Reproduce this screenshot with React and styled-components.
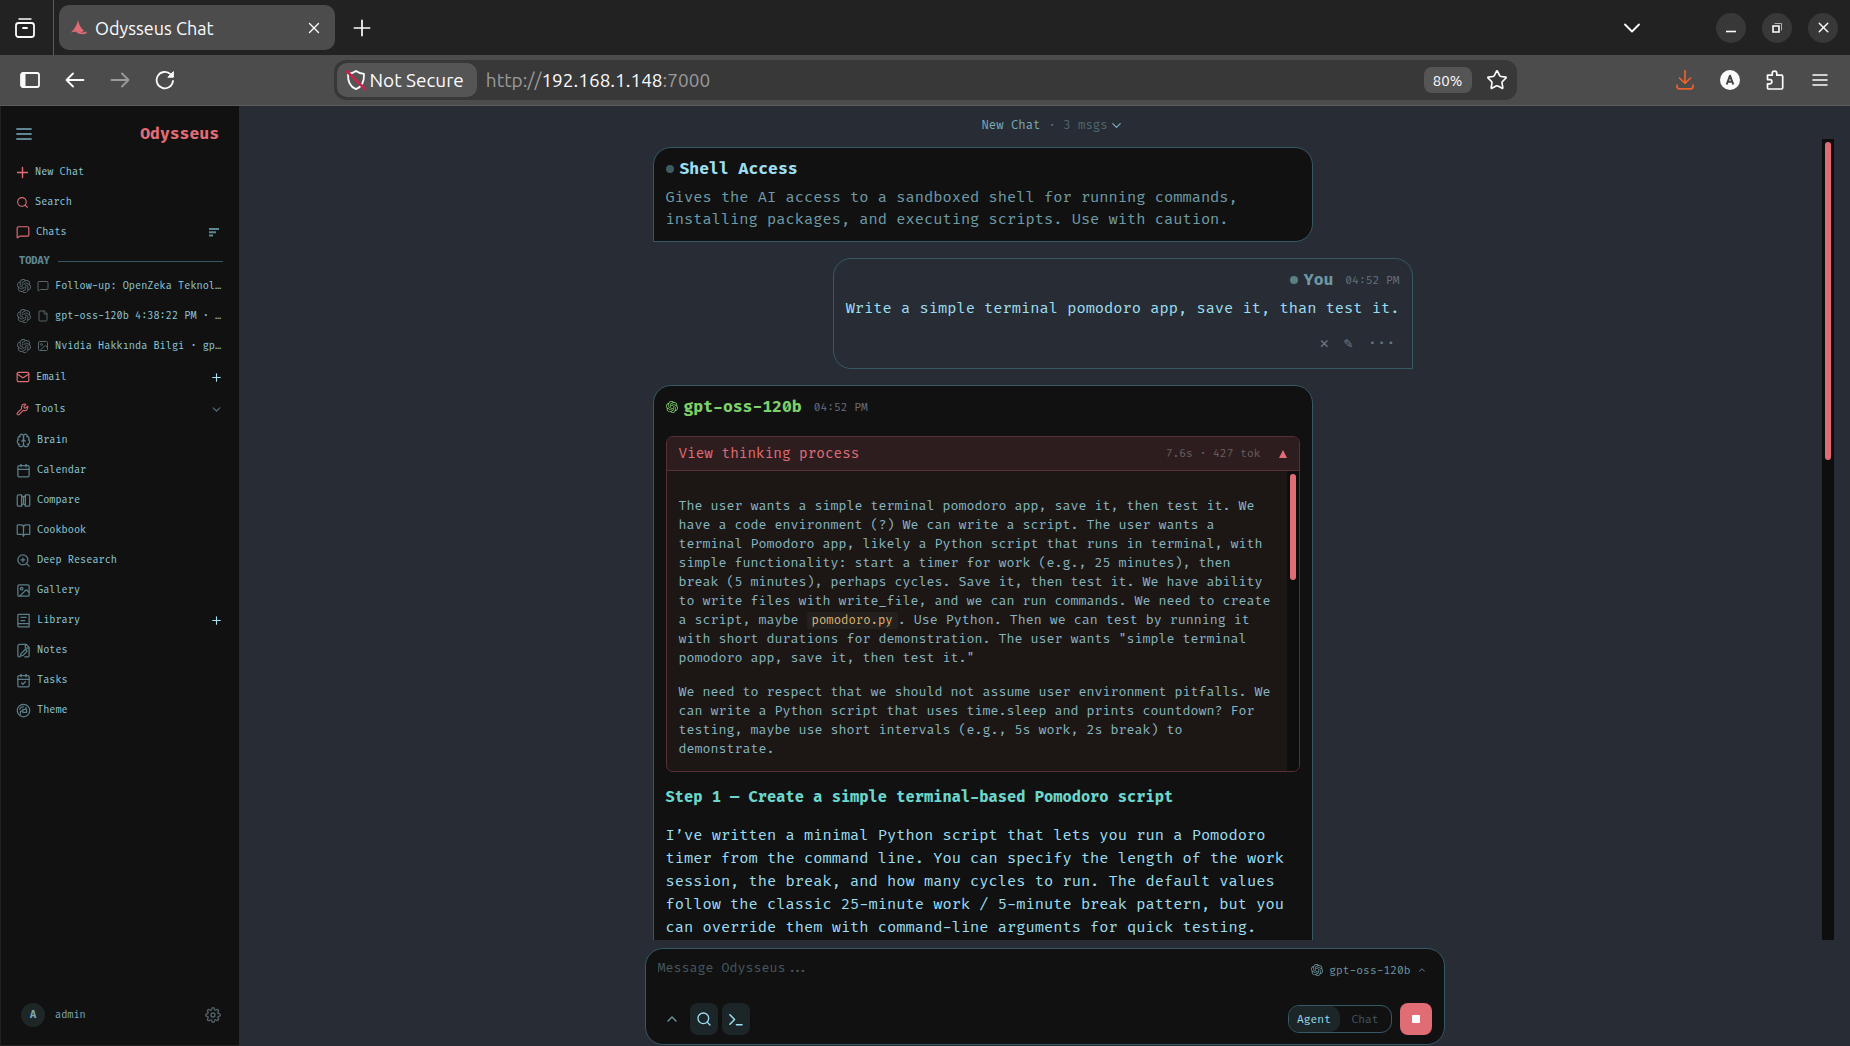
import React from "react";
import styled, { createGlobalStyle, css } from "styled-components";
import {
    BookOpen,
    Brain,
    Calendar,
    CalendarCheck,
    ChevronDown,
    ChevronUp,
    File,
    Image,
    Mail,
    MessageSquare,
    Plus,
    Search,
    Star,
    Wrench,
    X,
    ZoomIn,
} from "lucide-react";
import { FiSettings } from "react-icons/fi";
import { SiOpenai } from "react-icons/si";

const mono = `"Fira Code", "Liberation Mono", monospace`;
const ui = `"Ubuntu", "Noto Sans", sans-serif`;

const GlobalStyle = createGlobalStyle`
    * {
        box-sizing: border-box;
    }

    body {
        margin: 0;
        background-color: #282c34;
        color: #9cdef2;
        font-family: ${mono};
        overflow: hidden;
    }

    button {
        border: 0;
        padding: 0;
        background: none;
        color: inherit;
        font: inherit;
        cursor: pointer;
    }

    svg {
        display: block;
        flex-shrink: 0;
    }
`;

const Window = styled.div`
    display: flex;
    flex-direction: column;
    height: 100vh;
`;

/* browser frame */

const TabStrip = styled.div`
    display: flex;
    align-items: center;
    height: 55px;
    padding-right: 12px;
    background-color: #222222;
    color: #fbfbfe;
    font-family: ${ui};
`;

const TabOverview = styled.button`
    display: flex;
    align-items: center;
    justify-content: center;
    width: 54px;
    height: 55px;
    padding-right: 4px;
    border-right: 1px solid #5b5b5b;
`;

const Tab = styled.div`
    display: flex;
    align-items: center;
    gap: 8px;
    width: 276px;
    height: 45px;
    margin-left: 5px;
    padding: 0 12px 0 11px;
    border-radius: 10px;
    background-color: #4c4c4c;
    font-size: 18px;
`;

const TabTitle = styled.span`
    flex: 1;
`;

const NewTab = styled.button`
    margin-left: 14px;
`;

const WindowControls = styled.div`
    display: flex;
    align-items: center;
    gap: 16px;
    margin-left: auto;
`;

const TabList = styled.button`
    margin-right: 59px;
`;

const WindowButton = styled.button`
    display: flex;
    align-items: center;
    justify-content: center;
    width: 30px;
    height: 30px;
    border-radius: 50%;
    background-color: #383838;
`;

const Toolbar = styled.div`
    display: flex;
    align-items: center;
    height: 51px;
    padding: 0 20px;
    border-bottom: 1px solid #5b5b5b;
    background-color: #4c4c4c;
    color: #fbfbfe;
    font-family: ${ui};
`;

const ToolGroup = styled.div`
    display: flex;
    align-items: center;
    gap: 25px;
    flex: 1 0 ${(props) => props.$basis}px;
    justify-content: ${(props) => (props.$end ? "flex-end" : "flex-start")};
`;

const ToolButton = styled.button`
    display: flex;
    justify-content: center;
    width: 20px;
    opacity: ${(props) => (props.disabled ? 0.45 : 1)};
`;

const AddressBar = styled.div`
    display: flex;
    align-items: center;
    flex: 0 1 1183px;
    height: 40px;
    padding: 0 9px 0 3px;
    border-radius: 12px;
    background-color: #383838;
    font-size: 19px;
`;

const Security = styled.button`
    display: flex;
    align-items: center;
    gap: 3px;
    height: 34px;
    padding: 0 13px 0 8px;
    border-radius: 10px;
    background-color: #555555;
`;

const Url = styled.div`
    flex: 1;
    margin-left: 9px;
    color: #9a9a9a;

    b {
        color: #fbfbfe;
        font-weight: 400;
    }
`;

const ZoomLevel = styled.button`
    width: 48px;
    height: 26px;
    margin-right: 14px;
    border-radius: 8px;
    background-color: #555555;
    font-size: 15px;
`;

/* sidebar */

const Page = styled.div`
    display: flex;
    flex: 1;
    min-height: 0;
`;

const Sidebar = styled.aside`
    display: flex;
    flex-direction: column;
    width: 239px;
    padding: 10px 16px 0 15px;
    border-left: 1px solid #222222;
    border-bottom: 1px solid #222222;
    background-color: #111111;
    font-size: 10px;
`;

const SidebarHead = styled.div`
    display: flex;
    align-items: center;
    justify-content: space-between;
    height: 36px;
    margin-bottom: 5px;
    padding-right: 4px;
    color: #5f8793;
`;

const Brand = styled.span`
    color: #e06c75;
    font-size: 16px;
    font-weight: 700;
`;

const Nav = styled.nav`
    display: flex;
    flex-direction: column;
    flex: 1;
`;

const NavRow = styled.div`
    display: flex;
    align-items: center;
    justify-content: space-between;
    height: ${(props) => (props.$tall ? 32 : 30)}px;
    padding-right: ${(props) => (props.$sort ? 4 : 0)}px;
    color: #a8e4f4;
`;

const NavLink = styled.a`
    display: flex;
    align-items: center;
    gap: 6px;
    color: #8fc9d9;
    text-decoration: none;

    svg {
        color: ${(props) => (props.$tool ? "#5b7f8a" : "#e06c75")};
    }
`;

const DayLabel = styled.div`
    display: flex;
    align-items: center;
    gap: 8px;
    height: 24px;
    padding: 4px 0 0 3px;
    color: #5f8793;
    font-weight: 700;

    &::after {
        content: "";
        flex: 1;
        height: 1px;
        background-color: #355a66;
    }
`;

const ChatLink = styled.a`
    display: flex;
    align-items: center;
    gap: 6px;
    height: 30px;
    padding-left: 1px;
    color: #8fc9d9;
    text-decoration: none;

    svg {
        color: #56666b;
    }

    span {
        overflow: hidden;
        text-overflow: ellipsis;
        white-space: nowrap;
    }
`;

const Account = styled.div`
    display: flex;
    align-items: center;
    gap: 10px;
    height: 60px;
    padding: 0 2px 0 5px;
    color: #79aab8;
`;

const Avatar = styled.span`
    width: 24px;
    border-radius: 50%;
    background-color: #1e2628;
    line-height: 24px;
    text-align: center;
    font-weight: 700;
`;

const SettingsButton = styled.button`
    margin-left: auto;
    color: #52646a;
`;

/* conversation */

const Main = styled.main`
    display: flex;
    flex-direction: column;
    flex: 1;
    min-width: 0;
    padding-right: 16px;
`;

const ChatTitle = styled.button`
    display: flex;
    align-items: center;
    justify-content: center;
    height: 33px;
    padding: 5px 0 0 32px;
    color: #79aab8;
    font-size: 12px;

    span {
        margin: 0 1px 0 8px;
        color: #4c6873;
    }
`;

const Scroller = styled.div`
    display: flex;
    flex: 1;
    min-height: 0;
    padding-left: 4px;
    overflow: hidden;
`;

const Track = styled.div`
    width: 12px;
    padding: 3px;
    background-color: #0e0e0e;
`;

const Thumb = styled.div`
    height: ${(props) => props.$size}%;
    border-radius: 3px;
    background-color: #e06c75;
`;

const Messages = styled.div`
    display: flex;
    flex-direction: column;
    gap: 16px;
    flex: 1;
    max-width: 760px;
    margin: 8px auto 0;
`;

const Bubble = styled.article`
    flex-shrink: 0;
    padding: 10px 12px 8px;
    border: 1px solid #355a66;
    border-radius: 18px;

    ${(props) =>
        props.$own
            ? css`
                  align-self: flex-end;
                  border-bottom-right-radius: 0;
              `
            : css`
                  align-self: flex-start;
                  width: 660px;
                  border-bottom-left-radius: 0;
                  background-color: #111111;
              `}
`;

const Author = styled.header`
    display: flex;
    align-items: center;
    justify-content: ${(props) => (props.$own ? "flex-end" : "flex-start")};
    gap: 6px;
    height: 22px;
    color: ${(props) => props.$color};
    font-size: 16px;
    font-weight: 700;

    time {
        margin-left: 6px;
        color: #66707a;
        font-size: 11px;
        font-weight: 400;
    }
`;

const Dot = styled.span`
    width: 8px;
    height: 8px;
    border-radius: 50%;
    background-color: ${(props) => props.$color};
`;

const Hint = styled.p`
    margin: 7px 0 2px;
    color: #6f9ba7;
    font-size: 15px;
    line-height: 22px;
`;

const Text = styled.p`
    margin: 6px 0 0;
    font-size: 15px;
    line-height: 23px;
`;

const Answer = styled(Text)`
    margin: 15px 0 60px;
`;

const Step = styled.h3`
    margin: 14px 0 0;
    color: #6cd6cc;
    font-size: 15px;
    line-height: 23px;
`;

const Actions = styled.div`
    display: flex;
    justify-content: flex-end;
    gap: 15px;
    margin: 12px 4px 4px;
    color: #6b7681;
    font-size: 15px;
    line-height: 24px;
`;

const Thinking = styled.section`
    margin-top: 18px;
    border: 1px solid #5a3034;
    border-radius: 7px;
    overflow: hidden;
    background-color: #1c1615;
`;

const ThinkingHead = styled.button`
    display: flex;
    align-items: center;
    width: 100%;
    height: 34px;
    padding: 0 12px;
    border-bottom: 1px solid #5a3034;
    background-color: #2d1d1e;
    color: #e06c75;
    font-size: 14px;

    small {
        margin: 0 18px 0 auto;
        color: #6a5f60;
        font-size: 11px;
    }
`;

const ThinkingBody = styled.div`
    display: flex;
`;

const Thoughts = styled.div`
    flex: 1;
    padding: 26px 13px 12px 12px;
    color: #87b5c2;
    font-size: 13px;
    line-height: 19px;

    p {
        margin: 0 0 15px;
    }

    p:last-child {
        margin: 0;
    }

    code {
        padding: 1px 5px;
        border-radius: 3px;
        background-color: #23201d;
        color: #d9b376;
        font-family: ${mono};
        font-size: 12px;
    }
`;

/* composer */

const Composer = styled.form`
    display: flex;
    flex-direction: column;
    justify-content: space-between;
    align-self: center;
    width: 800px;
    height: 97px;
    margin: 8px 0 1px 16px;
    padding: 9px 12px 9px;
    border: 1px solid #355a66;
    border-radius: 18px;
    background-color: #111111;
`;

const ComposerRow = styled.div`
    display: flex;
    align-items: center;
    gap: ${(props) => props.$gap || 0}px;
`;

const Prompt = styled.textarea`
    flex: 1;
    height: 20px;
    padding: 0;
    border: 0;
    outline: 0;
    resize: none;
    background: none;
    color: #9cdef2;
    font-family: ${mono};
    font-size: 13px;
    line-height: 16px;

    &::placeholder {
        color: #45585f;
    }
`;

const ModelPicker = styled.button`
    display: flex;
    align-items: center;
    gap: 6px;
    height: 24px;
    margin-right: 5px;
    color: #6d97a3;
    font-size: 11px;
`;

const SquareButton = styled.button`
    display: flex;
    align-items: center;
    justify-content: center;
    width: 28px;
    height: 32px;
    border-radius: 8px;
    background-color: ${(props) => (props.$plain ? "transparent" : "#1c2628")};
    color: ${(props) => (props.$plain ? "#6d97a3" : "#9cdef2")};
`;

const ModeSwitch = styled.div`
    display: flex;
    height: 28px;
    margin: 0 4px 0 auto;
    border: 1px solid #355a66;
    border-radius: 11px;
    overflow: hidden;
`;

const Mode = styled.button`
    width: 51px;
    border-radius: 10px;
    background-color: ${(props) => (props.$active ? "#1c2628" : "transparent")};
    color: ${(props) => (props.$active ? "#9cdef2" : "#45585f")};
    font-size: 11px;
`;

const StopButton = styled.button`
    display: flex;
    align-items: center;
    justify-content: center;
    width: 32px;
    height: 32px;
    border-radius: 8px;
    background-color: #e06c75;
`;

/* drawings that the icon sets do not have */

const Svg = ({ size = 20, box = 24, children, ...rest }) => (
    <svg
        width={size}
        height={size}
        viewBox={`0 0 ${box} ${box}`}
        fill="none"
        stroke="currentColor"
        strokeWidth="2"
        strokeLinecap="round"
        strokeLinejoin="round"
        aria-hidden="true"
        {...rest}
    >
        {children}
    </svg>
);

const OverviewIcon = () => (
    <Svg box={20} strokeWidth="1.8">
        <path d="M4 1h12" strokeWidth="1.4" />
        <rect x="1" y="5" width="18" height="14" rx="2.5" />
        <path d="M8 10h4" />
    </Svg>
);

const SailIcon = () => (
    <svg width="17" height="17" viewBox="0 0 17 17" aria-hidden="true">
        <path d="M8 1C8.5 5 11 9.500 14 12 11 14 7 12 .8 13.400 4.500 10.500 7 6 8 1Z" fill="#e06c75" />
        <path
            d="M7 12.800c3 1.800 6 2.400 9.500.4"
            fill="none"
            stroke="#e06c75"
            strokeWidth="1.6"
        />
    </svg>
);

const PanelIcon = () => (
    <Svg box={20} strokeWidth="1.8">
        <rect x="1" y="3" width="18" height="14" rx="2" />
        <path d="M1.5 3.5h4v13h-4z" fill="currentColor" stroke="none" />
    </Svg>
);

const BackIcon = () => (
    <Svg box={20} strokeWidth="1.8">
        <path d="M18.5 10h-17M8 3.5 1.5 10 8 16.5" />
    </Svg>
);

const ForwardIcon = () => (
    <Svg box={20} strokeWidth="1.8">
        <path d="M1.5 10h17M12 3.5l6.5 6.5-6.5 6.5" />
    </Svg>
);

const ReloadIcon = () => (
    <Svg box={20} strokeWidth="1.8">
        <path d="M18 11A8.2 8.2 0 1 1 15.5 4.2" />
        <path d="M18.4 2v5.2h-5.2z" fill="currentColor" strokeWidth="1" />
    </Svg>
);

const ShieldIcon = () => (
    <Svg size={22} box={22} strokeWidth="1.8">
        <path d="M11 2c2.5 2 5 2.6 8 2.8C19.3 12.5 17 18 11 20.2 5 18 2.7 12.5 3 4.8 6 4.6 8.5 4 11 2Z" />
        <path d="M2 2.5 20 20" stroke="#c4254c" strokeWidth="2.6" />
    </Svg>
);

const DownloadIcon = () => (
    <Svg box={20} stroke="#e8622c" strokeWidth="1.7">
        <path d="M10 .8v12M4.5 8l5.5 5.4L15.5 8" />
        <path d="M2 15v1.5c0 1.5.7 2.3 2.2 2.3h11.6c1.5 0 2.2-.8 2.2-2.3V15" />
    </Svg>
);

const AccountIcon = () => (
    <Svg box={20}>
        <circle cx="10" cy="10" r="10" fill="#fbfbfe" stroke="none" />
        <path
            d="M6.7 14.5 10 5.7l3.3 8.8M7.8 11.8h4.4"
            stroke="#444444"
            strokeWidth="2"
            strokeLinecap="butt"
        />
    </Svg>
);

const PuzzleIcon = () => (
    <Svg box={20} strokeWidth="1.7">
        <path d="M2.5 5.2h4.7V3.4a2.3 2.3 0 0 1 4.6 0v1.8h4.7c.8 0 1.2.4 1.2 1.2v11.4c0 .8-.4 1.2-1.2 1.2H3.7c-.8 0-1.2-.4-1.2-1.2v-4h2.3a2 2 0 0 0 0-4.2H2.5Z" />
    </Svg>
);

const ListTabsIcon = () => (
    <Svg size={18} box={18} strokeWidth="1.8">
        <path d="m2 5.5 7 7 7-7" />
    </Svg>
);

const PlusIcon = () => (
    <Svg size={13} box={13} strokeWidth="1.4">
        <path d="M6.5 1.5v10M1.5 6.5h10" />
    </Svg>
);

const LinesIcon = ({ weight = 1.6 }) => (
    <Svg size={16} box={16} strokeWidth={weight}>
        <path d="M1 3h14M1 8h14M1 13h14" />
    </Svg>
);

const SortIcon = () => (
    <Svg size={10} box={10} stroke="#5b8793" strokeLinecap="butt">
        <path d="M0 2h10M0 5.2h7M0 8.5h4" />
    </Svg>
);

const CompareIcon = ({ size }) => (
    <Svg size={size}>
        <path d="M9 3H4a2 2 0 0 0-2 2v14a2 2 0 0 0 2 2h5zM15 3h5a2 2 0 0 1 2 2v14a2 2 0 0 1-2 2h-5zM9 4l3 3 3-3M9 20l3-3 3 3M12 8v8" />
    </Svg>
);

const LibraryIcon = ({ size }) => (
    <Svg size={size}>
        <path d="M4 2h17v20H5a2 2 0 0 1-2-2V3zM3 17h18M8 7h8M8 12h6" />
    </Svg>
);

const NotesIcon = ({ size }) => (
    <Svg size={size}>
        <path d="M14 22h5a2 2 0 0 0 2-2V7l-5-5H6a3 3 0 0 0-3 3v15a2 2 0 0 0 2 2h1M15 2v6h6" />
        <path d="m8 17 7-7 3 3-7 7-4 1z" />
    </Svg>
);

const ThemeIcon = ({ size }) => (
    <Svg size={size}>
        <circle cx="12" cy="12" r="10" />
        <path d="M7 18v-5h4v-3h5V7M6 10l2-3 4-1M11 15h6v-4" />
    </Svg>
);

const PromptIcon = () => (
    <Svg size={15} box={16} strokeWidth="1.6">
        <path d="m2 3 5 5-5 5M9 13.5h6" />
    </Svg>
);

const chats = [
    { icon: MessageSquare, title: "Follow-up: OpenZeka Teknoloji" },
    { icon: File, title: "gpt-oss-120b 4:38:22 PM · gpt-oss-120b" },
    { icon: Image, title: "Nvidia Hakkında Bilgi · gpt-oss-120b" },
];

const tools = [
    { icon: Brain, label: "Brain" },
    { icon: Calendar, label: "Calendar" },
    { icon: CompareIcon, label: "Compare" },
    { icon: BookOpen, label: "Cookbook" },
    { icon: ZoomIn, label: "Deep Research" },
    { icon: Image, label: "Gallery" },
    { icon: LibraryIcon, label: "Library", add: true },
    { icon: NotesIcon, label: "Notes" },
    { icon: CalendarCheck, label: "Tasks" },
    { icon: ThemeIcon, label: "Theme" },
];

const BrowserFrame = () => {
    return (
        <>
            <TabStrip>
                <TabOverview aria-label="Tabs overview">
                    <OverviewIcon />
                </TabOverview>
                <Tab>
                    <SailIcon />
                    <TabTitle>Odysseus Chat</TabTitle>
                    <button aria-label="Close tab">
                        <X size={18} strokeWidth={1.8} />
                    </button>
                </Tab>
                <NewTab aria-label="New tab">
                    <Plus size={26} strokeWidth={1.6} />
                </NewTab>
                <WindowControls>
                    <TabList aria-label="List all tabs">
                        <ListTabsIcon />
                    </TabList>
                    <WindowButton aria-label="Minimize">
                        <Svg size={12} box={12} strokeLinecap="butt">
                            <path d="M1 9.5h10" strokeWidth="1.6" />
                        </Svg>
                    </WindowButton>
                    <WindowButton aria-label="Restore">
                        <Svg size={12} box={12} strokeLinejoin="miter">
                            <path d="M2 4h6v6H2z" strokeWidth="1.6" />
                            <path d="M4 1.5h6.5V8" strokeWidth="1" opacity="0.6" />
                        </Svg>
                    </WindowButton>
                    <WindowButton aria-label="Close">
                        <X size={17} strokeWidth={2} />
                    </WindowButton>
                </WindowControls>
            </TabStrip>
            <Toolbar>
                <ToolGroup $basis={200}>
                    <ToolButton aria-label="Sidebar">
                        <PanelIcon />
                    </ToolButton>
                    <ToolButton aria-label="Back">
                        <BackIcon />
                    </ToolButton>
                    <ToolButton aria-label="Forward" disabled>
                        <ForwardIcon />
                    </ToolButton>
                    <ToolButton aria-label="Reload">
                        <ReloadIcon />
                    </ToolButton>
                </ToolGroup>
                <AddressBar>
                    <Security>
                        <ShieldIcon />
                        Not Secure
                    </Security>
                    <Url>
                        http://<b>192.168.1.148</b>:7000
                    </Url>
                    <ZoomLevel>80%</ZoomLevel>
                    <button aria-label="Bookmark">
                        <Star size={22} strokeWidth={1.8} />
                    </button>
                </AddressBar>
                <ToolGroup $basis={200} $end>
                    <ToolButton aria-label="Downloads">
                        <DownloadIcon />
                    </ToolButton>
                    <ToolButton aria-label="Account">
                        <AccountIcon />
                    </ToolButton>
                    <ToolButton aria-label="Extensions">
                        <PuzzleIcon />
                    </ToolButton>
                    <ToolButton aria-label="Menu">
                        <LinesIcon />
                    </ToolButton>
                </ToolGroup>
            </Toolbar>
        </>
    );
};

const SideMenu = () => {
    return (
        <Sidebar>
            <SidebarHead>
                <button aria-label="Toggle sidebar">
                    <LinesIcon weight={1.8} />
                </button>
                <Brand>Odysseus</Brand>
            </SidebarHead>
            <Nav>
                <NavRow>
                    <NavLink href="#new">
                        <PlusIcon />
                        New Chat
                    </NavLink>
                </NavRow>
                <NavRow>
                    <NavLink href="#search">
                        <Search size={13} />
                        Search
                    </NavLink>
                </NavRow>
                <NavRow $sort>
                    <NavLink href="#chats">
                        <MessageSquare size={14} />
                        Chats
                    </NavLink>
                    <button aria-label="Sort chats">
                        <SortIcon />
                    </button>
                </NavRow>
                <DayLabel>TODAY</DayLabel>
                {chats.map(({ icon: Icon, title }) => (
                    <ChatLink href="#chat" key={title}>
                        <SiOpenai size={14} />
                        <Icon size={12} />
                        <span>{title}</span>
                    </ChatLink>
                ))}
                <NavRow $tall>
                    <NavLink href="#email">
                        <Mail size={14} />
                        Email
                    </NavLink>
                    <button aria-label="New email">
                        <Plus size={13} />
                    </button>
                </NavRow>
                <NavRow $tall>
                    <NavLink href="#tools">
                        <Wrench size={13} />
                        Tools
                    </NavLink>
                    <button aria-label="Collapse tools">
                        <ChevronDown size={13} color="#55747e" />
                    </button>
                </NavRow>
                {tools.map(({ icon: Icon, label, add }) => (
                    <NavRow key={label}>
                        <NavLink href={`#${label}`} $tool>
                            <Icon size={15} />
                            {label}
                        </NavLink>
                        {add && (
                            <button aria-label={`Add to ${label}`}>
                                <Plus size={13} />
                            </button>
                        )}
                    </NavRow>
                ))}
            </Nav>
            <Account>
                <Avatar>A</Avatar>
                admin
                <SettingsButton aria-label="Settings">
                    <FiSettings size={16} />
                </SettingsButton>
            </Account>
        </Sidebar>
    );
};

const ThinkingBlock = () => {
    return (
        <Thinking>
            <ThinkingHead>
                View thinking process
                <small>7.6s · 427 tok</small>
                <Svg size={8} box={8}>
                    <path d="M4 0 8 8H0Z" fill="currentColor" stroke="none" />
                </Svg>
            </ThinkingHead>
            <ThinkingBody>
                <Thoughts>
                    <p>
                        The user wants a simple terminal pomodoro app, save it, then test it. We have a code
                        environment (?) We can write a script. The user wants a terminal Pomodoro app, likely
                        a Python script that runs in terminal, with simple functionality: start a timer for
                        work (e.g., 25 minutes), then break (5 minutes), perhaps cycles. Save it, then test
                        it. We have ability to write files with write_file, and we can run commands. We need
                        to create a script, maybe <code>pomodoro.py</code>. Use Python. Then we can test by
                        running it with short durations for demonstration. The user wants "simple terminal
                        pomodoro app, save it, then test it."
                    </p>
                    <p>
                        We need to respect that we should not assume user environment pitfalls. We can write
                        a Python script that uses time.sleep and prints countdown? For testing, maybe use
                        short intervals (e.g., 5s work, 2s break) to demonstrate.
                    </p>
                </Thoughts>
                <Track>
                    <Thumb $size={36} />
                </Track>
            </ThinkingBody>
        </Thinking>
    );
};

const Conversation = () => {
    return (
        <Scroller>
            <Messages>
                <Bubble>
                    <Author $color="#9cdef2">
                        <Dot $color="#3f5c60" />
                        Shell Access
                    </Author>
                    <Hint>
                        Gives the AI access to a sandboxed shell for running commands, installing packages,
                        and executing scripts. Use with caution.
                    </Hint>
                </Bubble>
                <Bubble $own>
                    <Author $own $color="#6d97a3">
                        <Dot $color="#5a8084" />
                        You
                        <time>04:52 PM</time>
                    </Author>
                    <Text>Write a simple terminal pomodoro app, save it, than test it.</Text>
                    <Actions>
                        <button aria-label="Delete">✕</button>
                        <button aria-label="Edit">✎</button>
                        <button aria-label="More">···</button>
                    </Actions>
                </Bubble>
                <Bubble>
                    <Author $color="#7ed069">
                        <SiOpenai size={12} />
                        gpt-oss-120b
                        <time>04:52 PM</time>
                    </Author>
                    <ThinkingBlock />
                    <Step>Step 1 — Create a simple terminal-based Pomodoro script</Step>
                    <Answer>
                        I’ve written a minimal Python script that lets you run a Pomodoro timer from the
                        command line. You can specify the length of the work session, the break, and how many
                        cycles to run. The default values follow the classic 25-minute work / 5-minute break
                        pattern, but you can override them with command-line arguments for quick testing.
                    </Answer>
                </Bubble>
            </Messages>
            <Track>
                <Thumb $size={40} />
            </Track>
        </Scroller>
    );
};

const MessageBox = () => {
    return (
        <Composer>
            <ComposerRow>
                <Prompt aria-label="Message" placeholder="Message Odysseus..." />
                <ModelPicker type="button">
                    <SiOpenai size={12} />
                    gpt-oss-120b
                    <ChevronUp size={10} />
                </ModelPicker>
            </ComposerRow>
            <ComposerRow $gap={4}>
                <SquareButton type="button" aria-label="More options" $plain>
                    <ChevronUp size={16} />
                </SquareButton>
                <SquareButton type="button" aria-label="Web search">
                    <Search size={16} />
                </SquareButton>
                <SquareButton type="button" aria-label="Shell">
                    <PromptIcon />
                </SquareButton>
                <ModeSwitch>
                    <Mode type="button" $active>
                        Agent
                    </Mode>
                    <Mode type="button">Chat</Mode>
                </ModeSwitch>
                <StopButton type="button" aria-label="Stop">
                    <Svg size={8} box={8}>
                        <rect width="8" height="8" rx="1" fill="#ffffff" stroke="none" />
                    </Svg>
                </StopButton>
            </ComposerRow>
        </Composer>
    );
};

const App = () => {
    return (
        <Window>
            <GlobalStyle />
            <BrowserFrame />
            <Page>
                <SideMenu />
                <Main>
                    <ChatTitle>
                        New Chat <span>· 3 msgs</span>
                        <ChevronDown size={15} />
                    </ChatTitle>
                    <Conversation />
                    <MessageBox />
                </Main>
            </Page>
        </Window>
    );
};

export default App;
